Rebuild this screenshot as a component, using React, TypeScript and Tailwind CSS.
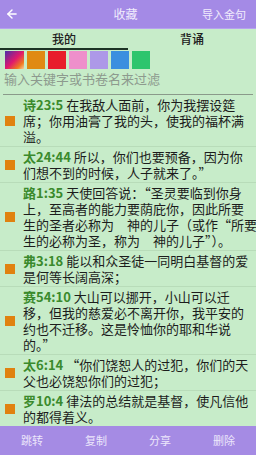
import { ArrowLeft } from 'lucide-react';

// 收藏页：颜色标签 + 过滤框 + 经文列表 + 底部操作栏
type Verse = { ref: string; lines: string[] };

const verses: Verse[] = [
  { ref: '诗23:5', lines: ['在我敌人面前，你为我摆设筵', '席；你用油膏了我的头，使我的福杯满', '溢。'] },
  { ref: '太24:44', lines: ['所以，你们也要预备，因为你', '们想不到的时候，人子就来了。”'] },
  {
    ref: '路1:35',
    lines: ['天使回答说：“圣灵要临到你身', '上，至高者的能力要荫庇你，因此所要', '生的圣者必称为　神的儿子（或作“所要', '生的必称为圣，称为　神的儿子”）。'],
  },
  { ref: '弗3:18', lines: ['能以和众圣徒一同明白基督的爱', '是何等长阔高深；'] },
  { ref: '赛54:10', lines: ['大山可以挪开，小山可以迁', '移，但我的慈爱必不离开你，我平安的', '约也不迁移。这是怜恤你的耶和华说', '的。”'] },
  { ref: '太6:14', lines: ['“你们饶恕人的过犯，你们的天', '父也必饶恕你们的过犯；'] },
  { ref: '罗10:4', lines: ['律法的总结就是基督，使凡信他', '的都得着义。'] },
  { ref: '林前13:4', lines: ['爱是恒久忍耐，又有恩慈；爱是', '不嫉妒，爱是不自夸，不张狂，'] },
];

const swatches = ['bg-[#e08a12]', 'bg-[#e81d2b]', 'bg-[#ee8fcb]', 'bg-[#ad98e8]', 'bg-[#3b8fdf]', 'bg-[#2dc56d]'];

export default function App() {
  return (
    <main
      className="flex h-[455px] w-[256px] flex-col overflow-hidden bg-[#c7ecc9] text-[#1c1c1c]"
      style={{ fontFamily: '"Noto Sans CJK SC", "Noto Sans", sans-serif' }}
    >
      <header className="flex h-[29px] shrink-0 items-center justify-between border-b border-[#b6a2ee] bg-[#a48ae6] pl-[5px] pr-[10px] text-white">
        <ArrowLeft size={14} strokeWidth={2.5} />
        <span className="ml-[30px] text-[12px] text-[#f1ecfc]">收藏</span>
        <span className="text-[11px] text-[#f1ecfc]">导入金句</span>
      </header>

      <nav className="flex shrink-0 text-[12px] font-medium text-[#202020]">
        <div className="flex w-[128px] flex-col items-center">
          <span className="pt-[2px] leading-[16px]">我的</span>
          <div className="mt-[1px] h-[2px] w-full bg-[#1d3325]" />
        </div>
        <div className="flex w-[128px] flex-col items-center">
          <span className="pt-[2px] leading-[16px]">背诵</span>
        </div>
      </nav>

      <div className="flex shrink-0 gap-[3px] px-[5px] pt-[1px]">
        <div className="h-[18px] w-[19px] bg-[linear-gradient(135deg,#4a2fa8_0%,#e0186e_50%,#f07a20_80%,#f6d0a0_100%)]" />
        {swatches.map((c) => (
          <div key={c} className={`h-[18px] w-[18px] ${c}`} />
        ))}
      </div>

      <div className="mx-[3px] mt-[1px] shrink-0 border-b border-[#8a9a8a] px-[1px] pb-[6px] text-[13px] leading-[18px] text-[#8d9a8e]">
        输入关键字或书卷名来过滤
      </div>

      <section className="min-h-0 flex-1 overflow-hidden">
        {verses.map((v) => (
          <article key={v.ref} className="flex items-center border-b border-[#b8dcb9] py-[1.5px]">
            <span className="ml-[5px] mr-[8px] h-[10px] w-[10px] shrink-0 bg-[#e0820f]" />
            <div className="whitespace-nowrap text-[13px] leading-[16px]">
              {v.lines.map((line, i) => (
                <div key={i}>
                  {i === 0 ? <span className="font-semibold text-[#3a8a2c]">{v.ref} </span> : null}
                  {line}
                </div>
              ))}
            </div>
          </article>
        ))}
      </section>

      <footer className="grid h-[29px] shrink-0 grid-cols-4 items-center bg-[#a58be4] text-center text-[11px] text-[#ece6fb]">
        <span>跳转</span>
        <span>复制</span>
        <span>分享</span>
        <span>删除</span>
      </footer>
    </main>
  );
}
